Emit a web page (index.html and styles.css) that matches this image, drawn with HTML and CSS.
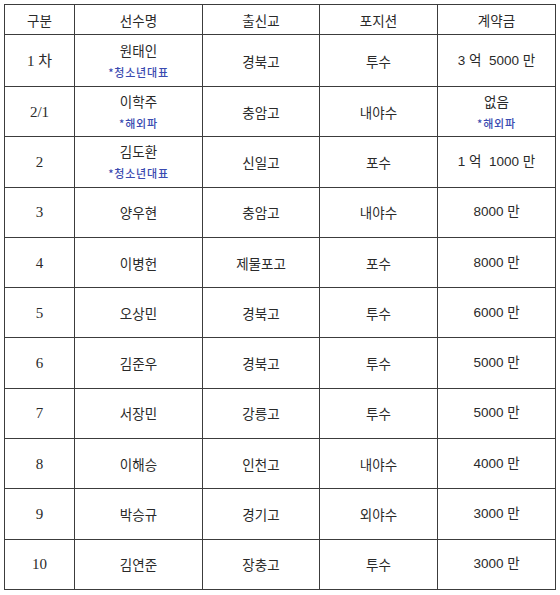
FILE: index.html
```html
<!DOCTYPE html>
<html lang="ko">
<head>
<meta charset="utf-8">
<link rel="stylesheet" href="styles.css">
</head>
<body>
<table class="draft">
  <colgroup>
    <col class="c1"><col class="c2"><col class="c3"><col class="c4"><col class="c5">
  </colgroup>
  <thead>
    <tr class="head"><th>구분</th><th>선수명</th><th>출신교</th><th>포지션</th><th>계약금</th></tr>
  </thead>
  <tbody>
    <tr class="first"><td class="num">1 차</td><td><div class="name">원태인</div><div class="note">*청소년대표</div></td><td>경북고</td><td>투수</td><td class="money">3 억&nbsp; 5000 만</td></tr>
    <tr><td class="num">2/1</td><td><div class="name">이학주</div><div class="note">*해외파</div></td><td>충암고</td><td>내야수</td><td class="money"><div class="name">없음</div><div class="note">*해외파</div></td></tr>
    <tr><td class="num">2</td><td><div class="name">김도환</div><div class="note">*청소년대표</div></td><td>신일고</td><td>포수</td><td class="money">1 억&nbsp; 1000 만</td></tr>
    <tr><td class="num">3</td><td>양우현</td><td>충암고</td><td>내야수</td><td class="money">8000 만</td></tr>
    <tr><td class="num">4</td><td>이병헌</td><td>제물포고</td><td>포수</td><td class="money">8000 만</td></tr>
    <tr><td class="num">5</td><td>오상민</td><td>경북고</td><td>투수</td><td class="money">6000 만</td></tr>
    <tr><td class="num">6</td><td>김준우</td><td>경북고</td><td>투수</td><td class="money">5000 만</td></tr>
    <tr><td class="num">7</td><td>서장민</td><td>강릉고</td><td>투수</td><td class="money">5000 만</td></tr>
    <tr><td class="num">8</td><td>이해승</td><td>인천고</td><td>내야수</td><td class="money">4000 만</td></tr>
    <tr><td class="num">9</td><td>박승규</td><td>경기고</td><td>외야수</td><td class="money">3000 만</td></tr>
    <tr><td class="num">10</td><td>김연준</td><td>장충고</td><td>투수</td><td class="money">3000 만</td></tr>
  </tbody>
</table>
</body>
</html>
```
FILE: styles.css
```css
html, body {
  margin: 0;
  padding: 0;
  background: #ffffff;
}
body {
  padding: 4px 0 0 4px;
  font-family: "Noto Sans CJK KR", "Liberation Serif", serif;
  color: #2a2a2a;
}
.draft {
  border-collapse: collapse;
  width: 551px;
  table-layout: fixed;
}
.c1 { width: 70px; }
.c2 { width: 128px; }
.c3 { width: 117px; }
.c4 { width: 118px; }
.c5 { width: 118px; }
.draft th,
.draft td {
  border: 1px solid #3c3c3c;
  text-align: center;
  vertical-align: middle;
  padding: 0;
  font-size: 13.5px;
  font-weight: 400;
  line-height: 20px;
}
.head { height: 30px; }
.draft tbody tr { height: 50.3px; }
.draft tbody tr.first { height: 52px; }
.draft td.num {
  font-family: "Liberation Serif", "Noto Sans CJK KR", serif;
  font-size: 15px;
}
.draft td.money {
  font-family: "Liberation Sans", "Noto Sans CJK KR", sans-serif;
  font-size: 13.5px;
}
.money .name {
  font-family: "Noto Sans CJK KR", sans-serif;
  font-size: 13.5px;
}
.name { line-height: 20px; }
.note {
  margin-top: 3px;
  line-height: 18px;
  font-size: 11px;
  font-weight: 500;
  letter-spacing: 0.8px;
  color: #3a4ab0;
  font-family: "Noto Sans CJK KR", sans-serif;
}
```
